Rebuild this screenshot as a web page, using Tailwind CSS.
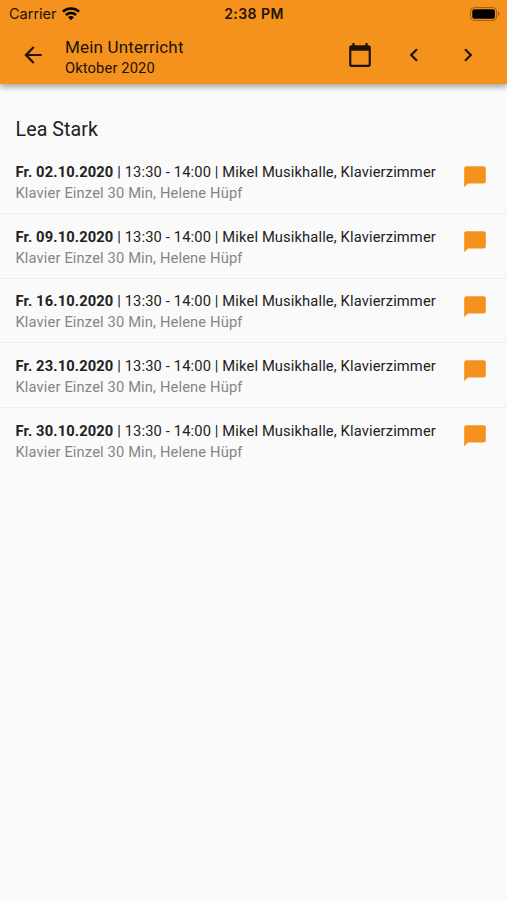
<!DOCTYPE html>
<html lang="de">
<head>
  <meta charset="UTF-8" />
  <title>Mein Unterricht</title>
  <meta name="viewport" content="width=device-width, initial-scale=1.0" />
  <script src="https://cdn.jsdelivr.net/npm/@tailwindcss/browser@4"></script>
</head>
<body class="bg-[#fafafa] text-[#212121] font-[Roboto,sans-serif] min-h-screen overflow-x-hidden">
  <header class="h-[84px] bg-[#f5921e] text-[#201204] shadow-[0_3px_6px_rgba(0,0,0,0.35)]">
    <!-- Status bar -->
    <div class="h-[27px] grid grid-cols-3 items-center pl-[9px] pr-[7px] font-[Inter,sans-serif]">
      <div class="flex items-center gap-[5px]">
        <span class="text-[14.5px] leading-none pt-px">Carrier</span>
        <svg class="w-[18px] h-[14px] text-black" viewBox="0 0 18 14" fill="none" stroke="currentColor" stroke-width="2.4">
          <path d="M.9 4.600C5.500.4 12.500.4 17.100 4.600" />
          <path d="M3.900 8c2.900-2.700 7.300-2.700 10.200 0" />
          <path d="M6.100 10.200c1.600-1.500 4.200-1.500 5.800 0L9 13.200z" fill="currentColor" stroke="none" />
        </svg>
      </div>
      <span class="text-center text-[14px] leading-none font-semibold tracking-[0.45px] mr-px">2:38 PM</span>
      <svg class="w-[30px] h-[14px] justify-self-end" viewBox="0 0 30 14">
        <rect x=".6" y=".6" width="26" height="12.8" rx="3.6" fill="none" stroke="#9b5c12" />
        <rect x="2.3" y="2.3" width="22.6" height="9.4" rx="2" fill="#000" />
        <path d="M28 4.800c1.900.6 1.900 3.800 0 4.400z" fill="#9b5c12" />
      </svg>
    </div>

    <!-- Toolbar -->
    <div class="h-[56px] flex items-center pl-5 pr-[26px]">
      <svg class="w-[26px] h-[26px]" viewBox="0 0 24 24" fill="currentColor"><path d="M20 11H7.830l5.590-5.590L12 4l-8 8 8 8 1.410-1.410L7.830 13H20v-2z" /></svg>
      <div class="ml-[19px] flex-1 pt-1">
        <h1 class="text-[17px] leading-[21px] tracking-[0.17px]">Mein Unterricht</h1>
        <p class="text-[14.7px] leading-[20px] tracking-[0.13px]">Oktober 2020</p>
      </div>
      <div class="flex items-center gap-[28px]">
        <svg class="w-[26px] h-[26px] mr-[0.5px]" viewBox="0 0 24 24" fill="currentColor"><path d="M20 3h-1V1h-2v2H7V1H5v2H4c-1.100 0-2 .9-2 2v16c0 1.100.9 2 2 2h16c1.100 0 2-.9 2-2V5c0-1.100-.9-2-2-2zm0 18H4V8h16v13z" /></svg>
        <svg class="w-[26px] h-[26px]" viewBox="0 0 24 24" fill="currentColor"><path d="M15.410 7.410L14 6l-6 6 6 6 1.410-1.410L10.830 12z" /></svg>
        <svg class="w-[26px] h-[26px]" viewBox="0 0 24 24" fill="currentColor"><path d="M10 6L8.590 7.410 13.170 12l-4.580 4.590L10 18l6-6z" /></svg>
      </div>
    </div>
  </header>

  <main class="pt-[32px]">
    <h2 class="px-[15.5px] text-[19.6px] leading-[27px] tracking-[0.1px]">Lea Stark</h2>

    <ul id="lessons" class="mt-[6px]"></ul>
  </main>

  <script>
    const dates = ["02.10.2020", "09.10.2020", "16.10.2020", "23.10.2020", "30.10.2020"];

    document.getElementById("lessons").innerHTML = dates.map(date => `
      <li class="h-[64.75px] flex justify-between pl-[15.5px] pr-[19px] pt-[12.8px] border-b border-[#eeeeee] last:border-b-0 whitespace-nowrap">
        <div class="text-[14.7px] leading-[21px] tracking-[0.14px]">
          <p><b class="font-bold">Fr. ${date}</b> | 13:30 - 14:00 | Mikel Musikhalle, Klavierzimmer</p>
          <p class="text-[#858585]">Klavier Einzel 30 Min, Helene Hüpf</p>
        </div>
        <svg class="w-[26px] h-[26px] mt-[2.4px] text-[#f5921e]" viewBox="0 0 24 24" fill="currentColor"><path d="M20 2H4c-1.100 0-2 .9-2 2v17.500L5.500 18H20c1.100 0 2-.9 2-2V4c0-1.100-.9-2-2-2z" /></svg>
      </li>`).join("");
  </script>
</body>
</html>
